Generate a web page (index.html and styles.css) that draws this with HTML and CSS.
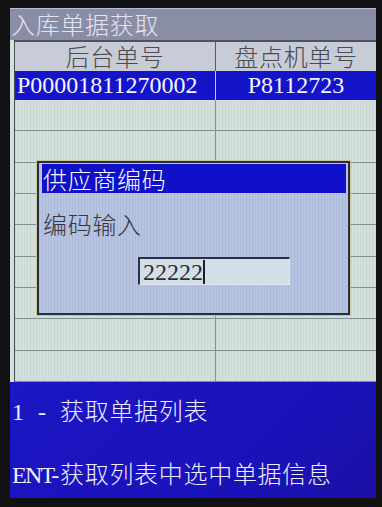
FILE: index.html
```html
<!DOCTYPE html>
<html lang="zh-CN">
<head>
<meta charset="utf-8">
<title>入库单据获取</title>
<link rel="stylesheet" href="styles.css">
</head>
<body>
<div class="screen">
  <div class="title">入库单据获取</div>
  <div class="table">
    <div class="row head">
      <div class="cell">后台单号</div>
      <div class="cell">盘点机单号</div>
    </div>
    <div class="row sel">
      <div class="cell num">P00001811270002</div>
      <div class="cell num">P8112723</div>
    </div>
    <div class="grid">
      <div class="gcell"></div><div class="gcell"></div>
      <div class="gcell"></div><div class="gcell"></div>
      <div class="gcell"></div><div class="gcell"></div>
      <div class="gcell"></div><div class="gcell"></div>
      <div class="gcell"></div><div class="gcell"></div>
      <div class="gcell"></div><div class="gcell"></div>
      <div class="gcell"></div><div class="gcell"></div>
      <div class="gcell"></div><div class="gcell"></div>
      <div class="gcell"></div><div class="gcell"></div>
    </div>
  </div>
  <div class="footer">
    <div class="line"><span class="pre num">1<span class="dash">-</span></span>获取单据列表</div>
    <div class="line"><span class="pre num ent">ENT-</span>获取列表中选中单据信息</div>
  </div>
  <div class="dialog">
    <div class="dtitle">供应商编码</div>
    <div class="label">编码输入</div>
    <div class="input"><span class="val num">22222</span></div>
  </div>
</div>
</body>
</html>
```

FILE: styles.css
```css
html, body {
  margin: 0;
  padding: 0;
}
body {
  width: 382px;
  height: 507px;
  box-sizing: border-box;
  padding: 8px 6px 9px 10px;
  background: #111114;
  font-family: "Noto Sans CJK SC", sans-serif;
  font-weight: 300;
  font-size: 24px;
  letter-spacing: 0.7px;
  overflow: hidden;
}
.screen {
  position: relative;
  width: 366px;
  height: 490px;
  background: #d4e0dc;
  display: flex;
  flex-direction: column;
}
.num {
  font-family: "Liberation Serif", serif;
  font-weight: 400;
  font-size: 24px;
  letter-spacing: 0;
}
.title {
  height: 32px;
  box-sizing: border-box;
  background: #8a8da6;
  box-shadow: inset 0 1px 0 #b8bccc;
  color: #e4e4ee;
  line-height: 31px;
  padding-left: 1px;
  white-space: nowrap;
}
.table {
  margin-left: 4px;
  border-left: 1px solid #4a4e5c;
  display: flex;
  flex-direction: column;
  background: repeating-linear-gradient(90deg, rgba(60,90,90,0.07) 0 1px, transparent 1px 3px), #d4e0dc;
}
.row {
  display: grid;
  grid-template-columns: 201px 1fr;
}
.cell {
  text-align: center;
  white-space: nowrap;
}
.cell:first-child {
  border-right: 1px solid #555a66;
}
.head {
  height: 31px;
  box-sizing: border-box;
  border-top: 2px solid #4e5260;
  background: #c8ccd6;
  color: #4a4a52;
  line-height: 28px;
}
.sel {
  height: 29px;
  background: #1414c8;
  color: #f4f4ff;
  line-height: 29px;
}
.sel .cell:first-child {
  border-right-color: #c8c8e8;
  text-align: left;
  padding-left: 2px;
}
.grid {
  height: 282px;
  display: grid;
  grid-template-columns: 201px 1fr;
  grid-template-rows: repeat(9, 1fr);
}
.gcell {
  border-bottom: 1px solid #7a9296;
}
.gcell:nth-child(odd) {
  border-right: 1px solid #7a9296;
}
.footer {
  flex: 1;
  background: linear-gradient(135deg, #1c16c4 0%, #1a12b8 70%, #1a10a4 100%);
  color: #eeeeff;
  padding: 13px 0 0 2px;
  display: flex;
  flex-direction: column;
  gap: 31px;
}
.line {
  line-height: 30px;
  white-space: nowrap;
}
.pre {
  display: inline-block;
  width: 48px;
  white-space: pre;
}
.dash {
  margin-left: 14px;
}
.pre.ent {
  letter-spacing: -1.7px;
}
.dialog {
  position: absolute;
  left: 27px;
  top: 153px;
  width: 313px;
  height: 154px;
  box-sizing: border-box;
  border: 2px solid #2a2e3e;
  box-shadow: 0 0 0 1px #c8c4a0;
  background: repeating-linear-gradient(90deg, rgba(40,60,120,0.08) 0 1px, transparent 1px 3px), #b6c4e2;
  padding: 1px 2px 0 3px;
}
.dtitle {
  height: 29px;
  background: #1010c8;
  color: #f8f8ff;
  line-height: 29px;
  padding-left: 1px;
}
.label {
  margin-top: 16px;
  line-height: 30px;
  color: #35363e;
  padding-left: 1px;
}
.input {
  margin: 18px 0 0 96px;
  width: 152px;
  height: 28px;
  box-sizing: border-box;
  border-top: 2px solid #2a3048;
  border-left: 2px solid #2a3048;
  border-right: 1px solid #e0e8f0;
  border-bottom: 1px solid #e0e8f0;
  background: #d2dfe6;
  padding-left: 3px;
  line-height: 25px;
  color: #2a2e38;
}
.val {
  display: inline-block;
  border-right: 2px solid #1a1e2a;
  height: 24px;
  line-height: 24px;
  vertical-align: top;
  margin-top: 1px;
}
```
